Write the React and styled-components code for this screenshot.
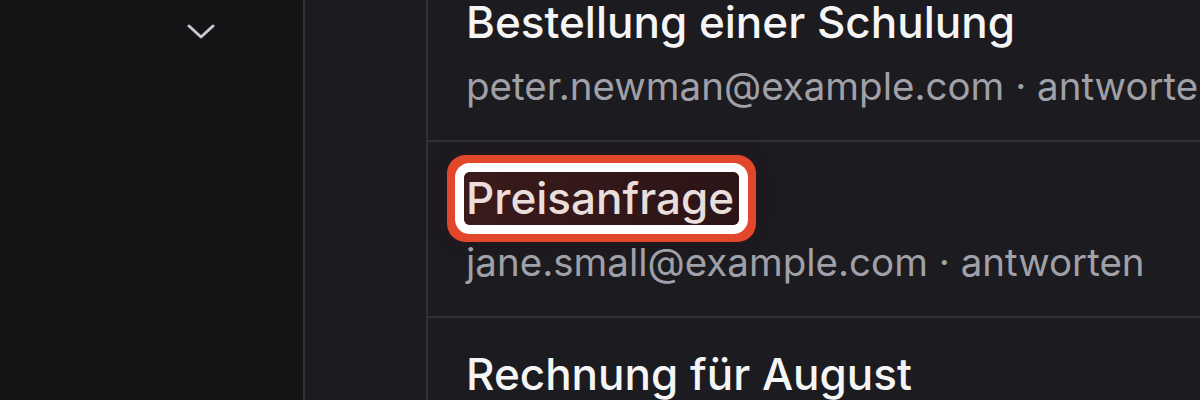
import React from "react";
import styled, { createGlobalStyle } from "styled-components";

const Global = createGlobalStyle`
  html, body {
    margin: 0;
    padding: 0;
    background: #1c1b20;
  }
  body {
    font-family: "Inter", "Noto Sans", sans-serif;
  }
`;

const Page = styled.div`
  display: flex;
  width: 1200px;
  height: 400px;
  overflow: hidden;
  background: #1c1b20;
`;

const Sidebar = styled.aside`
  width: 305px;
  flex-shrink: 0;
  background: #141416;
  border-right: 2px solid #303035;
  display: flex;
  flex-direction: column;
  align-items: flex-end;
  padding: 24px 88px 0 0;
  box-sizing: border-box;
`;

const Rail = styled.div`
  width: 121px;
  flex-shrink: 0;
  background: #1c1b20;
  border-right: 2px solid #303035;
`;

const List = styled.ul`
  list-style: none;
  margin: -34px 0 0;
  padding: 0;
  flex: 1;
  display: flex;
  flex-direction: column;
`;

const Row = styled.li`
  flex-shrink: 0;
  height: 176px;
  box-sizing: border-box;
  padding: 30px 0 0 38px;
  border-bottom: 2px solid #303035;
  white-space: nowrap;
`;

const Title = styled.div`
  font-size: 44px;
  line-height: 53px;
  font-weight: 500;
  color: #f5f5f6;
`;

const Sub = styled.div`
  margin-top: 14px;
  font-size: 38.5px;
  line-height: 46px;
  color: #a0a0a8;
`;

const Marked = styled.span`
  display: inline-block;
  margin-left: -2px;
  padding: 0 5px 0 2px;
  border-radius: 6px;
  color: #e9dedb;
  background: linear-gradient(90deg, #3b1a1b, #2b1517);
  box-shadow: 0 0 0 9px #ffffff, 0 0 0 17px #e2462b, 0 0 18px 18px rgba(60, 20, 20, 0.25);
`;

const Chevron = () => (
  <svg width="28" height="16" viewBox="0 0 28 16" fill="none">
    <path
      d="M2 2 L14 13 L26 2"
      stroke="#c9c9cd"
      strokeWidth="3"
      strokeLinecap="round"
      strokeLinejoin="round"
    />
  </svg>
);

const mails = [
  { title: "Bestellung einer Schulung", from: "peter.newman@example.com" },
  { title: "Preisanfrage", from: "jane.small@example.com", marked: true },
  { title: "Rechnung für August", from: "billing@example.com" },
];

export default function App() {
  return (
    <>
      <Global />
      <Page>
        <Sidebar>
          <Chevron />
        </Sidebar>
        <Rail />
        <List>
          {mails.map((m) => (
            <Row key={m.title}>
              <Title>{m.marked ? <Marked>{m.title}</Marked> : m.title}</Title>
              <Sub>{m.from} · antworten</Sub>
            </Row>
          ))}
        </List>
      </Page>
    </>
  );
}
